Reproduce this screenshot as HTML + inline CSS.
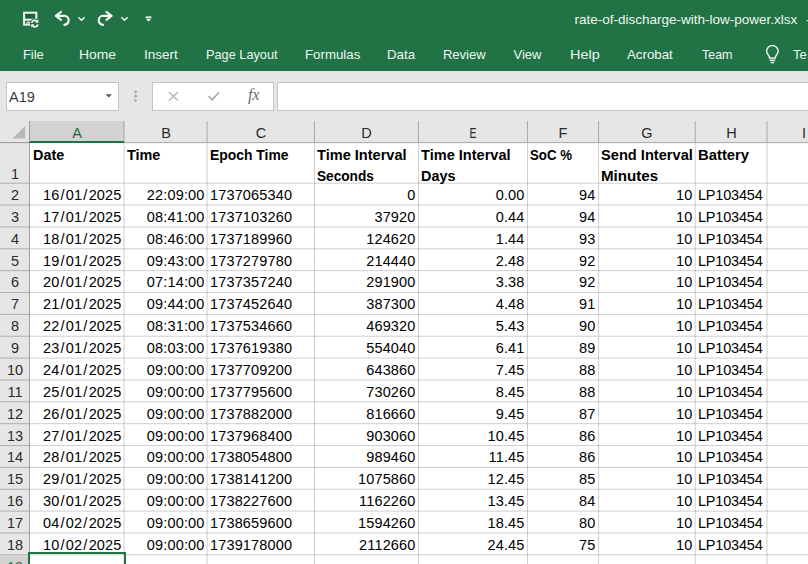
<!DOCTYPE html><html><head><meta charset="utf-8"><style>
html,body{margin:0;padding:0;}
body{width:808px;height:564px;overflow:hidden;position:relative;background:#fff;font-family:"Liberation Sans",sans-serif;}
.t{position:absolute;white-space:nowrap;line-height:1;}
.r{position:absolute;}
svg{position:absolute;}
</style></head><body>
<div class="r" style="left:0px;top:0px;width:808px;height:71px;background:#217346;"></div>
<div class="t" style="top:12.57px;font-size:13.5px;color:#eef6f1;left:574.50px;">rate-of-discharge-with-low-power.xlsx</div>
<div class="t" style="top:12.57px;font-size:13.5px;color:#eef6f1;left:806.00px;">-</div>
<div class="t" style="top:48.00px;font-size:13px;color:#eef6f1;left:22.90px;transform:scaleX(1);transform-origin:0 0;">File</div>
<div class="t" style="top:48.00px;font-size:13px;color:#eef6f1;left:79.10px;transform:scaleX(1.07);transform-origin:0 0;">Home</div>
<div class="t" style="top:48.00px;font-size:13px;color:#eef6f1;left:144.30px;transform:scaleX(1.04);transform-origin:0 0;">Insert</div>
<div class="t" style="top:48.00px;font-size:13px;color:#eef6f1;left:206.00px;transform:scaleX(0.98);transform-origin:0 0;">Page Layout</div>
<div class="t" style="top:48.00px;font-size:13px;color:#eef6f1;left:305.10px;transform:scaleX(1.02);transform-origin:0 0;">Formulas</div>
<div class="t" style="top:48.00px;font-size:13px;color:#eef6f1;left:387.10px;transform:scaleX(1.02);transform-origin:0 0;">Data</div>
<div class="t" style="top:48.00px;font-size:13px;color:#eef6f1;left:442.90px;transform:scaleX(1);transform-origin:0 0;">Review</div>
<div class="t" style="top:48.00px;font-size:13px;color:#eef6f1;left:513.50px;transform:scaleX(1);transform-origin:0 0;">View</div>
<div class="t" style="top:48.00px;font-size:13px;color:#eef6f1;left:569.80px;transform:scaleX(1.11);transform-origin:0 0;">Help</div>
<div class="t" style="top:48.00px;font-size:13px;color:#eef6f1;left:627.00px;transform:scaleX(1.02);transform-origin:0 0;">Acrobat</div>
<div class="t" style="top:48.00px;font-size:13px;color:#eef6f1;left:702.20px;transform:scaleX(0.96);transform-origin:0 0;">Team</div>
<div class="t" style="top:48.00px;font-size:13px;color:#eef6f1;left:793.00px;transform:scaleX(1);transform-origin:0 0;">Te</div>
<svg style="left:0;top:0" width="160" height="35" viewBox="0 0 160 35" fill="none" stroke="#f2f8f4">
<rect x="24.1" y="12.7" width="12.2" height="11.9" stroke-width="2" fill="#1b6139"/>
<path d="M24 19.7 H36.3" stroke-width="2"/>
<rect x="26.5" y="21.6" width="3.6" height="2" fill="#cfe3d6" stroke="none"/>
<circle cx="34.8" cy="23.5" r="4.9" fill="#217346" stroke="none"/>
<path d="M31.7 22.8 A3.1 3.1 0 0 1 37.4 21.8 M37.9 24.3 A3.1 3.1 0 0 1 32.2 25.3" stroke-width="1.7"/>
<path d="M38.4 19.6 V22.8 H35.2 Z M31.2 27.4 V24.2 H34.4 Z" fill="#f2f8f4" stroke="none"/>
<path d="M61 11.9 L55.8 15.8 L61 19.9 M56.2 15.8 H63.6 A4.7 4.55 0 0 1 64.4 24.9" stroke-width="2.2" stroke-linecap="round" stroke-linejoin="round"/>
<path d="M78.4 17.3 L81.5 20.2 L84.6 17.3" stroke-width="1.5"/>
<path d="M106.4 11.9 L111.6 15.8 L106.4 19.9 M111.2 15.8 H103.8 A4.7 4.55 0 0 0 103 24.9" stroke-width="2.2" stroke-linecap="round" stroke-linejoin="round"/>
<path d="M121.4 17.3 L124.5 20.2 L127.6 17.3" stroke-width="1.5"/>
<path d="M145.7 17.2 H151.4" stroke-width="1.6"/>
<path d="M145.7 18.8 H151.4 L148.55 21.4 Z" fill="#f2f8f4" stroke="none"/>
</svg><svg style="left:740px;top:36px" width="68" height="34" viewBox="740 36 68 34" fill="none" stroke="#e6f2ea" stroke-width="1.5">
<path d="M769.6 58 C769.6 55.3 766.6 54.2 766.6 51.3 A5.8 5.8 0 1 1 778.2 51.3 C778.2 54.2 775.2 55.3 775.2 58 Z"/>
<path d="M769.6 60.2 H775.2 M770.6 62.6 H774.2"/>
</svg>

<div class="r" style="left:0px;top:71px;width:808px;height:50px;background:#e6e6e6;"></div>
<div class="r" style="left:0px;top:71px;width:808px;height:1px;background:#d6eadf;"></div>
<div class="r" style="left:6px;top:82px;width:111px;height:27px;border:1px solid #c6c6c6;background:#fff;"></div>
<div class="t" style="top:89.73px;font-size:14.5px;color:#3a3a3a;left:9.00px;">A19</div>

<div class="r" style="left:152px;top:82px;width:120px;height:27px;border:1px solid #c6c6c6;background:#fff;"></div>
<div class="r" style="left:277px;top:82px;width:600px;height:27px;border:1px solid #c6c6c6;background:#fff;"></div>
<svg style="left:0;top:80" width="300" height="32" viewBox="0 80 300 32" fill="none">
<path d="M105.6 94.2 H112 L108.8 97.4 Z" fill="#595959"/>
<circle cx="135.6" cy="91.8" r="1.35" fill="#a6a6a6"/>
<circle cx="135.6" cy="96.2" r="1.35" fill="#a6a6a6"/>
<circle cx="135.6" cy="100.6" r="1.35" fill="#a6a6a6"/>
<path d="M168.8 92 L178 100.6 M178 92 L168.8 100.6" stroke="#b0b0b0" stroke-width="1.3"/>
<path d="M208.6 96.3 L212.2 99.8 L219 92.2" stroke="#a8a8a8" stroke-width="1.6"/>
</svg>
<div class="t" style="left:248px;top:86.5px;font-family:'Liberation Serif',serif;font-style:italic;font-size:16.5px;color:#707070;letter-spacing:-0.3px;">fx</div>
<div class="r" style="left:0px;top:121px;width:808px;height:21px;background:#e6e6e6;"></div>
<div class="r" style="left:0px;top:142px;width:29px;height:422px;background:#e6e6e6;"></div>
<svg style="left:0;top:120px" width="29" height="22" viewBox="0 120 29 22"><path d="M12.5 138.6 H25.2 V125.8 Z" fill="#b9b9b9"/></svg>
<div class="r" style="left:30px;top:121px;width:94px;height:21px;background:#d2d2d2;"></div>
<div class="r" style="left:123px;top:121px;width:1px;height:21px;background:rgba(0,0,0,0.117);"></div>
<div class="r" style="left:124px;top:121px;width:1px;height:21px;background:rgba(0,0,0,0.143);"></div>
<div class="r" style="left:206px;top:121px;width:1px;height:21px;background:rgba(0,0,0,0.110);"></div>
<div class="r" style="left:207px;top:121px;width:1px;height:21px;background:rgba(0,0,0,0.151);"></div>
<div class="r" style="left:314px;top:121px;width:1px;height:21px;background:rgba(0,0,0,0.261);"></div>
<div class="r" style="left:417px;top:121px;width:1px;height:21px;background:rgba(0,0,0,0.013);"></div>
<div class="r" style="left:418px;top:121px;width:1px;height:21px;background:rgba(0,0,0,0.248);"></div>
<div class="r" style="left:526px;top:121px;width:1px;height:21px;background:rgba(0,0,0,0.013);"></div>
<div class="r" style="left:527px;top:121px;width:1px;height:21px;background:rgba(0,0,0,0.248);"></div>
<div class="r" style="left:598px;top:121px;width:1px;height:21px;background:rgba(0,0,0,0.243);"></div>
<div class="r" style="left:599px;top:121px;width:1px;height:21px;background:rgba(0,0,0,0.018);"></div>
<div class="r" style="left:694px;top:121px;width:1px;height:21px;background:rgba(0,0,0,0.068);"></div>
<div class="r" style="left:695px;top:121px;width:1px;height:21px;background:rgba(0,0,0,0.193);"></div>
<div class="r" style="left:766px;top:121px;width:1px;height:21px;background:rgba(0,0,0,0.138);"></div>
<div class="r" style="left:767px;top:121px;width:1px;height:21px;background:rgba(0,0,0,0.123);"></div>
<div class="r" style="left:29px;top:121px;width:1px;height:443px;background:#9e9e9e;"></div>
<div class="r" style="left:0px;top:142px;width:808px;height:1px;background:rgba(0,0,0,0.313);"></div>
<div class="r" style="left:0px;top:143px;width:808px;height:1px;background:rgba(0,0,0,0.035);"></div>
<div class="r" style="left:30px;top:141px;width:94px;height:2px;background:#217346;"></div>
<div class="t" style="top:125.73px;font-size:14.5px;color:#1c6a3f;left:-23.00px;width:200px;text-align:center;">A</div>
<div class="t" style="top:125.73px;font-size:14.5px;color:#2b2b2b;left:66.00px;width:200px;text-align:center;">B</div>
<div class="t" style="top:125.73px;font-size:14.5px;color:#2b2b2b;left:161.00px;width:200px;text-align:center;">C</div>
<div class="t" style="top:125.73px;font-size:14.5px;color:#2b2b2b;left:266.50px;width:200px;text-align:center;">D</div>
<div class="t" style="top:125.73px;font-size:14.5px;color:#2b2b2b;left:373.00px;width:200px;text-align:center;transform:scaleX(0.72);">E</div>
<div class="t" style="top:125.73px;font-size:14.5px;color:#2b2b2b;left:463.00px;width:200px;text-align:center;">F</div>
<div class="t" style="top:125.73px;font-size:14.5px;color:#2b2b2b;left:547.00px;width:200px;text-align:center;">G</div>
<div class="t" style="top:125.73px;font-size:14.5px;color:#2b2b2b;left:631.50px;width:200px;text-align:center;">H</div>
<div class="t" style="top:125.73px;font-size:14.5px;color:#2b2b2b;left:704.00px;width:200px;text-align:center;">I</div>
<div class="r" style="left:30px;top:182px;width:778px;height:1px;background:rgba(0,0,0,0.056);"></div>
<div class="r" style="left:30px;top:183px;width:778px;height:1px;background:rgba(0,0,0,0.132);"></div>
<div class="r" style="left:0px;top:182px;width:29px;height:1px;background:rgba(0,0,0,0.072);"></div>
<div class="r" style="left:0px;top:183px;width:29px;height:1px;background:rgba(0,0,0,0.167);"></div>
<div class="r" style="left:30px;top:204px;width:778px;height:1px;background:rgba(0,0,0,0.083);"></div>
<div class="r" style="left:30px;top:205px;width:778px;height:1px;background:rgba(0,0,0,0.105);"></div>
<div class="r" style="left:0px;top:204px;width:29px;height:1px;background:rgba(0,0,0,0.105);"></div>
<div class="r" style="left:0px;top:205px;width:29px;height:1px;background:rgba(0,0,0,0.134);"></div>
<div class="r" style="left:30px;top:226px;width:778px;height:1px;background:rgba(0,0,0,0.109);"></div>
<div class="r" style="left:30px;top:227px;width:778px;height:1px;background:rgba(0,0,0,0.079);"></div>
<div class="r" style="left:0px;top:226px;width:29px;height:1px;background:rgba(0,0,0,0.139);"></div>
<div class="r" style="left:0px;top:227px;width:29px;height:1px;background:rgba(0,0,0,0.100);"></div>
<div class="r" style="left:30px;top:248px;width:778px;height:1px;background:rgba(0,0,0,0.136);"></div>
<div class="r" style="left:30px;top:249px;width:778px;height:1px;background:rgba(0,0,0,0.053);"></div>
<div class="r" style="left:0px;top:248px;width:29px;height:1px;background:rgba(0,0,0,0.172);"></div>
<div class="r" style="left:0px;top:249px;width:29px;height:1px;background:rgba(0,0,0,0.067);"></div>
<div class="r" style="left:30px;top:270px;width:778px;height:1px;background:rgba(0,0,0,0.162);"></div>
<div class="r" style="left:30px;top:271px;width:778px;height:1px;background:rgba(0,0,0,0.026);"></div>
<div class="r" style="left:0px;top:270px;width:29px;height:1px;background:rgba(0,0,0,0.206);"></div>
<div class="r" style="left:0px;top:271px;width:29px;height:1px;background:rgba(0,0,0,0.033);"></div>
<div class="r" style="left:30px;top:292px;width:778px;height:1px;background:rgba(0,0,0,0.188);"></div>
<div class="r" style="left:0px;top:292px;width:29px;height:1px;background:rgba(0,0,0,0.239);"></div>
<div class="r" style="left:30px;top:313px;width:778px;height:1px;background:rgba(0,0,0,0.026);"></div>
<div class="r" style="left:30px;top:314px;width:778px;height:1px;background:rgba(0,0,0,0.162);"></div>
<div class="r" style="left:0px;top:313px;width:29px;height:1px;background:rgba(0,0,0,0.033);"></div>
<div class="r" style="left:0px;top:314px;width:29px;height:1px;background:rgba(0,0,0,0.206);"></div>
<div class="r" style="left:30px;top:335px;width:778px;height:1px;background:rgba(0,0,0,0.053);"></div>
<div class="r" style="left:30px;top:336px;width:778px;height:1px;background:rgba(0,0,0,0.136);"></div>
<div class="r" style="left:0px;top:335px;width:29px;height:1px;background:rgba(0,0,0,0.067);"></div>
<div class="r" style="left:0px;top:336px;width:29px;height:1px;background:rgba(0,0,0,0.172);"></div>
<div class="r" style="left:30px;top:357px;width:778px;height:1px;background:rgba(0,0,0,0.079);"></div>
<div class="r" style="left:30px;top:358px;width:778px;height:1px;background:rgba(0,0,0,0.109);"></div>
<div class="r" style="left:0px;top:357px;width:29px;height:1px;background:rgba(0,0,0,0.100);"></div>
<div class="r" style="left:0px;top:358px;width:29px;height:1px;background:rgba(0,0,0,0.139);"></div>
<div class="r" style="left:30px;top:379px;width:778px;height:1px;background:rgba(0,0,0,0.105);"></div>
<div class="r" style="left:30px;top:380px;width:778px;height:1px;background:rgba(0,0,0,0.083);"></div>
<div class="r" style="left:0px;top:379px;width:29px;height:1px;background:rgba(0,0,0,0.134);"></div>
<div class="r" style="left:0px;top:380px;width:29px;height:1px;background:rgba(0,0,0,0.105);"></div>
<div class="r" style="left:30px;top:401px;width:778px;height:1px;background:rgba(0,0,0,0.132);"></div>
<div class="r" style="left:30px;top:402px;width:778px;height:1px;background:rgba(0,0,0,0.056);"></div>
<div class="r" style="left:0px;top:401px;width:29px;height:1px;background:rgba(0,0,0,0.167);"></div>
<div class="r" style="left:0px;top:402px;width:29px;height:1px;background:rgba(0,0,0,0.072);"></div>
<div class="r" style="left:30px;top:423px;width:778px;height:1px;background:rgba(0,0,0,0.158);"></div>
<div class="r" style="left:30px;top:424px;width:778px;height:1px;background:rgba(0,0,0,0.030);"></div>
<div class="r" style="left:0px;top:423px;width:29px;height:1px;background:rgba(0,0,0,0.201);"></div>
<div class="r" style="left:0px;top:424px;width:29px;height:1px;background:rgba(0,0,0,0.038);"></div>
<div class="r" style="left:30px;top:445px;width:778px;height:1px;background:rgba(0,0,0,0.184);"></div>
<div class="r" style="left:0px;top:445px;width:29px;height:1px;background:rgba(0,0,0,0.234);"></div>
<div class="r" style="left:0px;top:446px;width:29px;height:1px;background:rgba(0,0,0,0.005);"></div>
<div class="r" style="left:30px;top:466px;width:778px;height:1px;background:rgba(0,0,0,0.023);"></div>
<div class="r" style="left:30px;top:467px;width:778px;height:1px;background:rgba(0,0,0,0.166);"></div>
<div class="r" style="left:0px;top:466px;width:29px;height:1px;background:rgba(0,0,0,0.029);"></div>
<div class="r" style="left:0px;top:467px;width:29px;height:1px;background:rgba(0,0,0,0.210);"></div>
<div class="r" style="left:30px;top:488px;width:778px;height:1px;background:rgba(0,0,0,0.049);"></div>
<div class="r" style="left:30px;top:489px;width:778px;height:1px;background:rgba(0,0,0,0.139);"></div>
<div class="r" style="left:0px;top:488px;width:29px;height:1px;background:rgba(0,0,0,0.062);"></div>
<div class="r" style="left:0px;top:489px;width:29px;height:1px;background:rgba(0,0,0,0.177);"></div>
<div class="r" style="left:30px;top:510px;width:778px;height:1px;background:rgba(0,0,0,0.075);"></div>
<div class="r" style="left:30px;top:511px;width:778px;height:1px;background:rgba(0,0,0,0.113);"></div>
<div class="r" style="left:0px;top:510px;width:29px;height:1px;background:rgba(0,0,0,0.096);"></div>
<div class="r" style="left:0px;top:511px;width:29px;height:1px;background:rgba(0,0,0,0.143);"></div>
<div class="r" style="left:30px;top:532px;width:778px;height:1px;background:rgba(0,0,0,0.102);"></div>
<div class="r" style="left:30px;top:533px;width:778px;height:1px;background:rgba(0,0,0,0.087);"></div>
<div class="r" style="left:0px;top:532px;width:29px;height:1px;background:rgba(0,0,0,0.129);"></div>
<div class="r" style="left:0px;top:533px;width:29px;height:1px;background:rgba(0,0,0,0.110);"></div>
<div class="r" style="left:30px;top:554px;width:778px;height:1px;background:rgba(0,0,0,0.128);"></div>
<div class="r" style="left:30px;top:555px;width:778px;height:1px;background:rgba(0,0,0,0.060);"></div>
<div class="r" style="left:0px;top:554px;width:29px;height:1px;background:rgba(0,0,0,0.163);"></div>
<div class="r" style="left:0px;top:555px;width:29px;height:1px;background:rgba(0,0,0,0.077);"></div>
<div class="r" style="left:123px;top:143px;width:1px;height:421px;background:rgba(0,0,0,0.085);"></div>
<div class="r" style="left:124px;top:143px;width:1px;height:421px;background:rgba(0,0,0,0.104);"></div>
<div class="r" style="left:206px;top:143px;width:1px;height:421px;background:rgba(0,0,0,0.079);"></div>
<div class="r" style="left:207px;top:143px;width:1px;height:421px;background:rgba(0,0,0,0.109);"></div>
<div class="r" style="left:314px;top:143px;width:1px;height:421px;background:rgba(0,0,0,0.188);"></div>
<div class="r" style="left:417px;top:143px;width:1px;height:421px;background:rgba(0,0,0,0.009);"></div>
<div class="r" style="left:418px;top:143px;width:1px;height:421px;background:rgba(0,0,0,0.179);"></div>
<div class="r" style="left:526px;top:143px;width:1px;height:421px;background:rgba(0,0,0,0.009);"></div>
<div class="r" style="left:527px;top:143px;width:1px;height:421px;background:rgba(0,0,0,0.179);"></div>
<div class="r" style="left:598px;top:143px;width:1px;height:421px;background:rgba(0,0,0,0.175);"></div>
<div class="r" style="left:599px;top:143px;width:1px;height:421px;background:rgba(0,0,0,0.013);"></div>
<div class="r" style="left:694px;top:143px;width:1px;height:421px;background:rgba(0,0,0,0.049);"></div>
<div class="r" style="left:695px;top:143px;width:1px;height:421px;background:rgba(0,0,0,0.139);"></div>
<div class="r" style="left:766px;top:143px;width:1px;height:421px;background:rgba(0,0,0,0.100);"></div>
<div class="r" style="left:767px;top:143px;width:1px;height:421px;background:rgba(0,0,0,0.088);"></div>
<div class="r" style="left:0px;top:555px;width:29px;height:9px;background:#d2d2d2;"></div>
<div class="t" style="top:166.73px;font-size:14.5px;color:#2b2b2b;left:-85.00px;width:200px;text-align:center;">1</div>
<div class="t" style="top:187.73px;font-size:14.5px;color:#2b2b2b;left:-85.00px;width:200px;text-align:center;">2</div>
<div class="t" style="top:209.73px;font-size:14.5px;color:#2b2b2b;left:-85.00px;width:200px;text-align:center;">3</div>
<div class="t" style="top:231.73px;font-size:14.5px;color:#2b2b2b;left:-85.00px;width:200px;text-align:center;">4</div>
<div class="t" style="top:253.73px;font-size:14.5px;color:#2b2b2b;left:-85.00px;width:200px;text-align:center;">5</div>
<div class="t" style="top:274.73px;font-size:14.5px;color:#2b2b2b;left:-85.00px;width:200px;text-align:center;">6</div>
<div class="t" style="top:296.73px;font-size:14.5px;color:#2b2b2b;left:-85.00px;width:200px;text-align:center;">7</div>
<div class="t" style="top:318.73px;font-size:14.5px;color:#2b2b2b;left:-85.00px;width:200px;text-align:center;">8</div>
<div class="t" style="top:340.73px;font-size:14.5px;color:#2b2b2b;left:-85.00px;width:200px;text-align:center;">9</div>
<div class="t" style="top:362.73px;font-size:14.5px;color:#2b2b2b;left:-85.00px;width:200px;text-align:center;">10</div>
<div class="t" style="top:384.73px;font-size:14.5px;color:#2b2b2b;left:-85.00px;width:200px;text-align:center;">11</div>
<div class="t" style="top:406.73px;font-size:14.5px;color:#2b2b2b;left:-85.00px;width:200px;text-align:center;">12</div>
<div class="t" style="top:428.73px;font-size:14.5px;color:#2b2b2b;left:-85.00px;width:200px;text-align:center;">13</div>
<div class="t" style="top:449.73px;font-size:14.5px;color:#2b2b2b;left:-85.00px;width:200px;text-align:center;">14</div>
<div class="t" style="top:471.73px;font-size:14.5px;color:#2b2b2b;left:-85.00px;width:200px;text-align:center;">15</div>
<div class="t" style="top:493.73px;font-size:14.5px;color:#2b2b2b;left:-85.00px;width:200px;text-align:center;">16</div>
<div class="t" style="top:515.73px;font-size:14.5px;color:#2b2b2b;left:-85.00px;width:200px;text-align:center;">17</div>
<div class="t" style="top:537.73px;font-size:14.5px;color:#2b2b2b;left:-85.00px;width:200px;text-align:center;">18</div>
<div class="t" style="top:559.73px;font-size:14.5px;color:#217346;left:-85.00px;width:200px;text-align:center;">19</div>
<div class="t" style="top:147.81px;font-size:14.4px;color:#000;font-weight:bold;left:33.00px;transform:scaleX(1);transform-origin:0 0;">Date</div>
<div class="t" style="top:147.81px;font-size:14.4px;color:#000;font-weight:bold;left:127.00px;transform:scaleX(1);transform-origin:0 0;">Time</div>
<div class="t" style="top:147.81px;font-size:14.4px;color:#000;font-weight:bold;left:210.00px;transform:scaleX(0.966);transform-origin:0 0;">Epoch Time</div>
<div class="t" style="top:147.81px;font-size:14.4px;color:#000;font-weight:bold;left:317.00px;transform:scaleX(1.012);transform-origin:0 0;">Time Interval</div>
<div class="t" style="top:168.81px;font-size:14.4px;color:#000;font-weight:bold;left:317.00px;transform:scaleX(0.948);transform-origin:0 0;">Seconds</div>
<div class="t" style="top:147.81px;font-size:14.4px;color:#000;font-weight:bold;left:421.00px;transform:scaleX(1.012);transform-origin:0 0;">Time Interval</div>
<div class="t" style="top:168.81px;font-size:14.4px;color:#000;font-weight:bold;left:421.00px;transform:scaleX(1);transform-origin:0 0;">Days</div>
<div class="t" style="top:147.81px;font-size:14.4px;color:#000;font-weight:bold;left:530.00px;transform:scaleX(0.92);transform-origin:0 0;">SoC %</div>
<div class="t" style="top:147.81px;font-size:14.4px;color:#000;font-weight:bold;left:601.00px;transform:scaleX(1.017);transform-origin:0 0;">Send Interval</div>
<div class="t" style="top:168.81px;font-size:14.4px;color:#000;font-weight:bold;left:601.00px;transform:scaleX(1.05);transform-origin:0 0;">Minutes</div>
<div class="t" style="top:147.81px;font-size:14.4px;color:#000;font-weight:bold;left:698.00px;transform:scaleX(1.03);transform-origin:0 0;">Battery</div>
<div class="t" style="top:187.73px;font-size:14.5px;color:#000;right:686.50px;letter-spacing:0.15px;">16<span style="margin:0 1.1px">/</span>01<span style="margin:0 1.1px">/</span>2025</div>
<div class="t" style="top:187.73px;font-size:14.5px;color:#000;right:603.50px;letter-spacing:0.15px;">22:09:00</div>
<div class="t" style="top:187.73px;font-size:14.5px;color:#000;left:210.00px;letter-spacing:0.15px;">1737065340</div>
<div class="t" style="top:187.73px;font-size:14.5px;color:#000;right:392.50px;letter-spacing:0.15px;">0</div>
<div class="t" style="top:187.73px;font-size:14.5px;color:#000;right:283.50px;letter-spacing:0.15px;">0.00</div>
<div class="t" style="top:187.73px;font-size:14.5px;color:#000;right:212.50px;letter-spacing:0.15px;">94</div>
<div class="t" style="top:187.73px;font-size:14.5px;color:#000;right:115.50px;letter-spacing:0.15px;">10</div>
<div class="t" style="top:187.73px;font-size:14.5px;color:#000;left:698.00px;letter-spacing:-0.2px;">LP103454</div>
<div class="t" style="top:209.73px;font-size:14.5px;color:#000;right:686.50px;letter-spacing:0.15px;">17<span style="margin:0 1.1px">/</span>01<span style="margin:0 1.1px">/</span>2025</div>
<div class="t" style="top:209.73px;font-size:14.5px;color:#000;right:603.50px;letter-spacing:0.15px;">08:41:00</div>
<div class="t" style="top:209.73px;font-size:14.5px;color:#000;left:210.00px;letter-spacing:0.15px;">1737103260</div>
<div class="t" style="top:209.73px;font-size:14.5px;color:#000;right:392.50px;letter-spacing:0.15px;">37920</div>
<div class="t" style="top:209.73px;font-size:14.5px;color:#000;right:283.50px;letter-spacing:0.15px;">0.44</div>
<div class="t" style="top:209.73px;font-size:14.5px;color:#000;right:212.50px;letter-spacing:0.15px;">94</div>
<div class="t" style="top:209.73px;font-size:14.5px;color:#000;right:115.50px;letter-spacing:0.15px;">10</div>
<div class="t" style="top:209.73px;font-size:14.5px;color:#000;left:698.00px;letter-spacing:-0.2px;">LP103454</div>
<div class="t" style="top:231.73px;font-size:14.5px;color:#000;right:686.50px;letter-spacing:0.15px;">18<span style="margin:0 1.1px">/</span>01<span style="margin:0 1.1px">/</span>2025</div>
<div class="t" style="top:231.73px;font-size:14.5px;color:#000;right:603.50px;letter-spacing:0.15px;">08:46:00</div>
<div class="t" style="top:231.73px;font-size:14.5px;color:#000;left:210.00px;letter-spacing:0.15px;">1737189960</div>
<div class="t" style="top:231.73px;font-size:14.5px;color:#000;right:392.50px;letter-spacing:0.15px;">124620</div>
<div class="t" style="top:231.73px;font-size:14.5px;color:#000;right:283.50px;letter-spacing:0.15px;">1.44</div>
<div class="t" style="top:231.73px;font-size:14.5px;color:#000;right:212.50px;letter-spacing:0.15px;">93</div>
<div class="t" style="top:231.73px;font-size:14.5px;color:#000;right:115.50px;letter-spacing:0.15px;">10</div>
<div class="t" style="top:231.73px;font-size:14.5px;color:#000;left:698.00px;letter-spacing:-0.2px;">LP103454</div>
<div class="t" style="top:253.73px;font-size:14.5px;color:#000;right:686.50px;letter-spacing:0.15px;">19<span style="margin:0 1.1px">/</span>01<span style="margin:0 1.1px">/</span>2025</div>
<div class="t" style="top:253.73px;font-size:14.5px;color:#000;right:603.50px;letter-spacing:0.15px;">09:43:00</div>
<div class="t" style="top:253.73px;font-size:14.5px;color:#000;left:210.00px;letter-spacing:0.15px;">1737279780</div>
<div class="t" style="top:253.73px;font-size:14.5px;color:#000;right:392.50px;letter-spacing:0.15px;">214440</div>
<div class="t" style="top:253.73px;font-size:14.5px;color:#000;right:283.50px;letter-spacing:0.15px;">2.48</div>
<div class="t" style="top:253.73px;font-size:14.5px;color:#000;right:212.50px;letter-spacing:0.15px;">92</div>
<div class="t" style="top:253.73px;font-size:14.5px;color:#000;right:115.50px;letter-spacing:0.15px;">10</div>
<div class="t" style="top:253.73px;font-size:14.5px;color:#000;left:698.00px;letter-spacing:-0.2px;">LP103454</div>
<div class="t" style="top:274.73px;font-size:14.5px;color:#000;right:686.50px;letter-spacing:0.15px;">20<span style="margin:0 1.1px">/</span>01<span style="margin:0 1.1px">/</span>2025</div>
<div class="t" style="top:274.73px;font-size:14.5px;color:#000;right:603.50px;letter-spacing:0.15px;">07:14:00</div>
<div class="t" style="top:274.73px;font-size:14.5px;color:#000;left:210.00px;letter-spacing:0.15px;">1737357240</div>
<div class="t" style="top:274.73px;font-size:14.5px;color:#000;right:392.50px;letter-spacing:0.15px;">291900</div>
<div class="t" style="top:274.73px;font-size:14.5px;color:#000;right:283.50px;letter-spacing:0.15px;">3.38</div>
<div class="t" style="top:274.73px;font-size:14.5px;color:#000;right:212.50px;letter-spacing:0.15px;">92</div>
<div class="t" style="top:274.73px;font-size:14.5px;color:#000;right:115.50px;letter-spacing:0.15px;">10</div>
<div class="t" style="top:274.73px;font-size:14.5px;color:#000;left:698.00px;letter-spacing:-0.2px;">LP103454</div>
<div class="t" style="top:296.73px;font-size:14.5px;color:#000;right:686.50px;letter-spacing:0.15px;">21<span style="margin:0 1.1px">/</span>01<span style="margin:0 1.1px">/</span>2025</div>
<div class="t" style="top:296.73px;font-size:14.5px;color:#000;right:603.50px;letter-spacing:0.15px;">09:44:00</div>
<div class="t" style="top:296.73px;font-size:14.5px;color:#000;left:210.00px;letter-spacing:0.15px;">1737452640</div>
<div class="t" style="top:296.73px;font-size:14.5px;color:#000;right:392.50px;letter-spacing:0.15px;">387300</div>
<div class="t" style="top:296.73px;font-size:14.5px;color:#000;right:283.50px;letter-spacing:0.15px;">4.48</div>
<div class="t" style="top:296.73px;font-size:14.5px;color:#000;right:212.50px;letter-spacing:0.15px;">91</div>
<div class="t" style="top:296.73px;font-size:14.5px;color:#000;right:115.50px;letter-spacing:0.15px;">10</div>
<div class="t" style="top:296.73px;font-size:14.5px;color:#000;left:698.00px;letter-spacing:-0.2px;">LP103454</div>
<div class="t" style="top:318.73px;font-size:14.5px;color:#000;right:686.50px;letter-spacing:0.15px;">22<span style="margin:0 1.1px">/</span>01<span style="margin:0 1.1px">/</span>2025</div>
<div class="t" style="top:318.73px;font-size:14.5px;color:#000;right:603.50px;letter-spacing:0.15px;">08:31:00</div>
<div class="t" style="top:318.73px;font-size:14.5px;color:#000;left:210.00px;letter-spacing:0.15px;">1737534660</div>
<div class="t" style="top:318.73px;font-size:14.5px;color:#000;right:392.50px;letter-spacing:0.15px;">469320</div>
<div class="t" style="top:318.73px;font-size:14.5px;color:#000;right:283.50px;letter-spacing:0.15px;">5.43</div>
<div class="t" style="top:318.73px;font-size:14.5px;color:#000;right:212.50px;letter-spacing:0.15px;">90</div>
<div class="t" style="top:318.73px;font-size:14.5px;color:#000;right:115.50px;letter-spacing:0.15px;">10</div>
<div class="t" style="top:318.73px;font-size:14.5px;color:#000;left:698.00px;letter-spacing:-0.2px;">LP103454</div>
<div class="t" style="top:340.73px;font-size:14.5px;color:#000;right:686.50px;letter-spacing:0.15px;">23<span style="margin:0 1.1px">/</span>01<span style="margin:0 1.1px">/</span>2025</div>
<div class="t" style="top:340.73px;font-size:14.5px;color:#000;right:603.50px;letter-spacing:0.15px;">08:03:00</div>
<div class="t" style="top:340.73px;font-size:14.5px;color:#000;left:210.00px;letter-spacing:0.15px;">1737619380</div>
<div class="t" style="top:340.73px;font-size:14.5px;color:#000;right:392.50px;letter-spacing:0.15px;">554040</div>
<div class="t" style="top:340.73px;font-size:14.5px;color:#000;right:283.50px;letter-spacing:0.15px;">6.41</div>
<div class="t" style="top:340.73px;font-size:14.5px;color:#000;right:212.50px;letter-spacing:0.15px;">89</div>
<div class="t" style="top:340.73px;font-size:14.5px;color:#000;right:115.50px;letter-spacing:0.15px;">10</div>
<div class="t" style="top:340.73px;font-size:14.5px;color:#000;left:698.00px;letter-spacing:-0.2px;">LP103454</div>
<div class="t" style="top:362.73px;font-size:14.5px;color:#000;right:686.50px;letter-spacing:0.15px;">24<span style="margin:0 1.1px">/</span>01<span style="margin:0 1.1px">/</span>2025</div>
<div class="t" style="top:362.73px;font-size:14.5px;color:#000;right:603.50px;letter-spacing:0.15px;">09:00:00</div>
<div class="t" style="top:362.73px;font-size:14.5px;color:#000;left:210.00px;letter-spacing:0.15px;">1737709200</div>
<div class="t" style="top:362.73px;font-size:14.5px;color:#000;right:392.50px;letter-spacing:0.15px;">643860</div>
<div class="t" style="top:362.73px;font-size:14.5px;color:#000;right:283.50px;letter-spacing:0.15px;">7.45</div>
<div class="t" style="top:362.73px;font-size:14.5px;color:#000;right:212.50px;letter-spacing:0.15px;">88</div>
<div class="t" style="top:362.73px;font-size:14.5px;color:#000;right:115.50px;letter-spacing:0.15px;">10</div>
<div class="t" style="top:362.73px;font-size:14.5px;color:#000;left:698.00px;letter-spacing:-0.2px;">LP103454</div>
<div class="t" style="top:384.73px;font-size:14.5px;color:#000;right:686.50px;letter-spacing:0.15px;">25<span style="margin:0 1.1px">/</span>01<span style="margin:0 1.1px">/</span>2025</div>
<div class="t" style="top:384.73px;font-size:14.5px;color:#000;right:603.50px;letter-spacing:0.15px;">09:00:00</div>
<div class="t" style="top:384.73px;font-size:14.5px;color:#000;left:210.00px;letter-spacing:0.15px;">1737795600</div>
<div class="t" style="top:384.73px;font-size:14.5px;color:#000;right:392.50px;letter-spacing:0.15px;">730260</div>
<div class="t" style="top:384.73px;font-size:14.5px;color:#000;right:283.50px;letter-spacing:0.15px;">8.45</div>
<div class="t" style="top:384.73px;font-size:14.5px;color:#000;right:212.50px;letter-spacing:0.15px;">88</div>
<div class="t" style="top:384.73px;font-size:14.5px;color:#000;right:115.50px;letter-spacing:0.15px;">10</div>
<div class="t" style="top:384.73px;font-size:14.5px;color:#000;left:698.00px;letter-spacing:-0.2px;">LP103454</div>
<div class="t" style="top:406.73px;font-size:14.5px;color:#000;right:686.50px;letter-spacing:0.15px;">26<span style="margin:0 1.1px">/</span>01<span style="margin:0 1.1px">/</span>2025</div>
<div class="t" style="top:406.73px;font-size:14.5px;color:#000;right:603.50px;letter-spacing:0.15px;">09:00:00</div>
<div class="t" style="top:406.73px;font-size:14.5px;color:#000;left:210.00px;letter-spacing:0.15px;">1737882000</div>
<div class="t" style="top:406.73px;font-size:14.5px;color:#000;right:392.50px;letter-spacing:0.15px;">816660</div>
<div class="t" style="top:406.73px;font-size:14.5px;color:#000;right:283.50px;letter-spacing:0.15px;">9.45</div>
<div class="t" style="top:406.73px;font-size:14.5px;color:#000;right:212.50px;letter-spacing:0.15px;">87</div>
<div class="t" style="top:406.73px;font-size:14.5px;color:#000;right:115.50px;letter-spacing:0.15px;">10</div>
<div class="t" style="top:406.73px;font-size:14.5px;color:#000;left:698.00px;letter-spacing:-0.2px;">LP103454</div>
<div class="t" style="top:428.73px;font-size:14.5px;color:#000;right:686.50px;letter-spacing:0.15px;">27<span style="margin:0 1.1px">/</span>01<span style="margin:0 1.1px">/</span>2025</div>
<div class="t" style="top:428.73px;font-size:14.5px;color:#000;right:603.50px;letter-spacing:0.15px;">09:00:00</div>
<div class="t" style="top:428.73px;font-size:14.5px;color:#000;left:210.00px;letter-spacing:0.15px;">1737968400</div>
<div class="t" style="top:428.73px;font-size:14.5px;color:#000;right:392.50px;letter-spacing:0.15px;">903060</div>
<div class="t" style="top:428.73px;font-size:14.5px;color:#000;right:283.50px;letter-spacing:0.15px;">10.45</div>
<div class="t" style="top:428.73px;font-size:14.5px;color:#000;right:212.50px;letter-spacing:0.15px;">86</div>
<div class="t" style="top:428.73px;font-size:14.5px;color:#000;right:115.50px;letter-spacing:0.15px;">10</div>
<div class="t" style="top:428.73px;font-size:14.5px;color:#000;left:698.00px;letter-spacing:-0.2px;">LP103454</div>
<div class="t" style="top:449.73px;font-size:14.5px;color:#000;right:686.50px;letter-spacing:0.15px;">28<span style="margin:0 1.1px">/</span>01<span style="margin:0 1.1px">/</span>2025</div>
<div class="t" style="top:449.73px;font-size:14.5px;color:#000;right:603.50px;letter-spacing:0.15px;">09:00:00</div>
<div class="t" style="top:449.73px;font-size:14.5px;color:#000;left:210.00px;letter-spacing:0.15px;">1738054800</div>
<div class="t" style="top:449.73px;font-size:14.5px;color:#000;right:392.50px;letter-spacing:0.15px;">989460</div>
<div class="t" style="top:449.73px;font-size:14.5px;color:#000;right:283.50px;letter-spacing:0.15px;">11.45</div>
<div class="t" style="top:449.73px;font-size:14.5px;color:#000;right:212.50px;letter-spacing:0.15px;">86</div>
<div class="t" style="top:449.73px;font-size:14.5px;color:#000;right:115.50px;letter-spacing:0.15px;">10</div>
<div class="t" style="top:449.73px;font-size:14.5px;color:#000;left:698.00px;letter-spacing:-0.2px;">LP103454</div>
<div class="t" style="top:471.73px;font-size:14.5px;color:#000;right:686.50px;letter-spacing:0.15px;">29<span style="margin:0 1.1px">/</span>01<span style="margin:0 1.1px">/</span>2025</div>
<div class="t" style="top:471.73px;font-size:14.5px;color:#000;right:603.50px;letter-spacing:0.15px;">09:00:00</div>
<div class="t" style="top:471.73px;font-size:14.5px;color:#000;left:210.00px;letter-spacing:0.15px;">1738141200</div>
<div class="t" style="top:471.73px;font-size:14.5px;color:#000;right:392.50px;letter-spacing:0.15px;">1075860</div>
<div class="t" style="top:471.73px;font-size:14.5px;color:#000;right:283.50px;letter-spacing:0.15px;">12.45</div>
<div class="t" style="top:471.73px;font-size:14.5px;color:#000;right:212.50px;letter-spacing:0.15px;">85</div>
<div class="t" style="top:471.73px;font-size:14.5px;color:#000;right:115.50px;letter-spacing:0.15px;">10</div>
<div class="t" style="top:471.73px;font-size:14.5px;color:#000;left:698.00px;letter-spacing:-0.2px;">LP103454</div>
<div class="t" style="top:493.73px;font-size:14.5px;color:#000;right:686.50px;letter-spacing:0.15px;">30<span style="margin:0 1.1px">/</span>01<span style="margin:0 1.1px">/</span>2025</div>
<div class="t" style="top:493.73px;font-size:14.5px;color:#000;right:603.50px;letter-spacing:0.15px;">09:00:00</div>
<div class="t" style="top:493.73px;font-size:14.5px;color:#000;left:210.00px;letter-spacing:0.15px;">1738227600</div>
<div class="t" style="top:493.73px;font-size:14.5px;color:#000;right:392.50px;letter-spacing:0.15px;">1162260</div>
<div class="t" style="top:493.73px;font-size:14.5px;color:#000;right:283.50px;letter-spacing:0.15px;">13.45</div>
<div class="t" style="top:493.73px;font-size:14.5px;color:#000;right:212.50px;letter-spacing:0.15px;">84</div>
<div class="t" style="top:493.73px;font-size:14.5px;color:#000;right:115.50px;letter-spacing:0.15px;">10</div>
<div class="t" style="top:493.73px;font-size:14.5px;color:#000;left:698.00px;letter-spacing:-0.2px;">LP103454</div>
<div class="t" style="top:515.73px;font-size:14.5px;color:#000;right:686.50px;letter-spacing:0.15px;">04<span style="margin:0 1.1px">/</span>02<span style="margin:0 1.1px">/</span>2025</div>
<div class="t" style="top:515.73px;font-size:14.5px;color:#000;right:603.50px;letter-spacing:0.15px;">09:00:00</div>
<div class="t" style="top:515.73px;font-size:14.5px;color:#000;left:210.00px;letter-spacing:0.15px;">1738659600</div>
<div class="t" style="top:515.73px;font-size:14.5px;color:#000;right:392.50px;letter-spacing:0.15px;">1594260</div>
<div class="t" style="top:515.73px;font-size:14.5px;color:#000;right:283.50px;letter-spacing:0.15px;">18.45</div>
<div class="t" style="top:515.73px;font-size:14.5px;color:#000;right:212.50px;letter-spacing:0.15px;">80</div>
<div class="t" style="top:515.73px;font-size:14.5px;color:#000;right:115.50px;letter-spacing:0.15px;">10</div>
<div class="t" style="top:515.73px;font-size:14.5px;color:#000;left:698.00px;letter-spacing:-0.2px;">LP103454</div>
<div class="t" style="top:537.73px;font-size:14.5px;color:#000;right:686.50px;letter-spacing:0.15px;">10<span style="margin:0 1.1px">/</span>02<span style="margin:0 1.1px">/</span>2025</div>
<div class="t" style="top:537.73px;font-size:14.5px;color:#000;right:603.50px;letter-spacing:0.15px;">09:00:00</div>
<div class="t" style="top:537.73px;font-size:14.5px;color:#000;left:210.00px;letter-spacing:0.15px;">1739178000</div>
<div class="t" style="top:537.73px;font-size:14.5px;color:#000;right:392.50px;letter-spacing:0.15px;">2112660</div>
<div class="t" style="top:537.73px;font-size:14.5px;color:#000;right:283.50px;letter-spacing:0.15px;">24.45</div>
<div class="t" style="top:537.73px;font-size:14.5px;color:#000;right:212.50px;letter-spacing:0.15px;">75</div>
<div class="t" style="top:537.73px;font-size:14.5px;color:#000;right:115.50px;letter-spacing:0.15px;">10</div>
<div class="t" style="top:537.73px;font-size:14.5px;color:#000;left:698.00px;letter-spacing:-0.2px;">LP103454</div>
<div class="r" style="left:28px;top:552px;width:94px;height:20px;border:2px solid #217346;border-bottom:none;"></div>
</body></html>
